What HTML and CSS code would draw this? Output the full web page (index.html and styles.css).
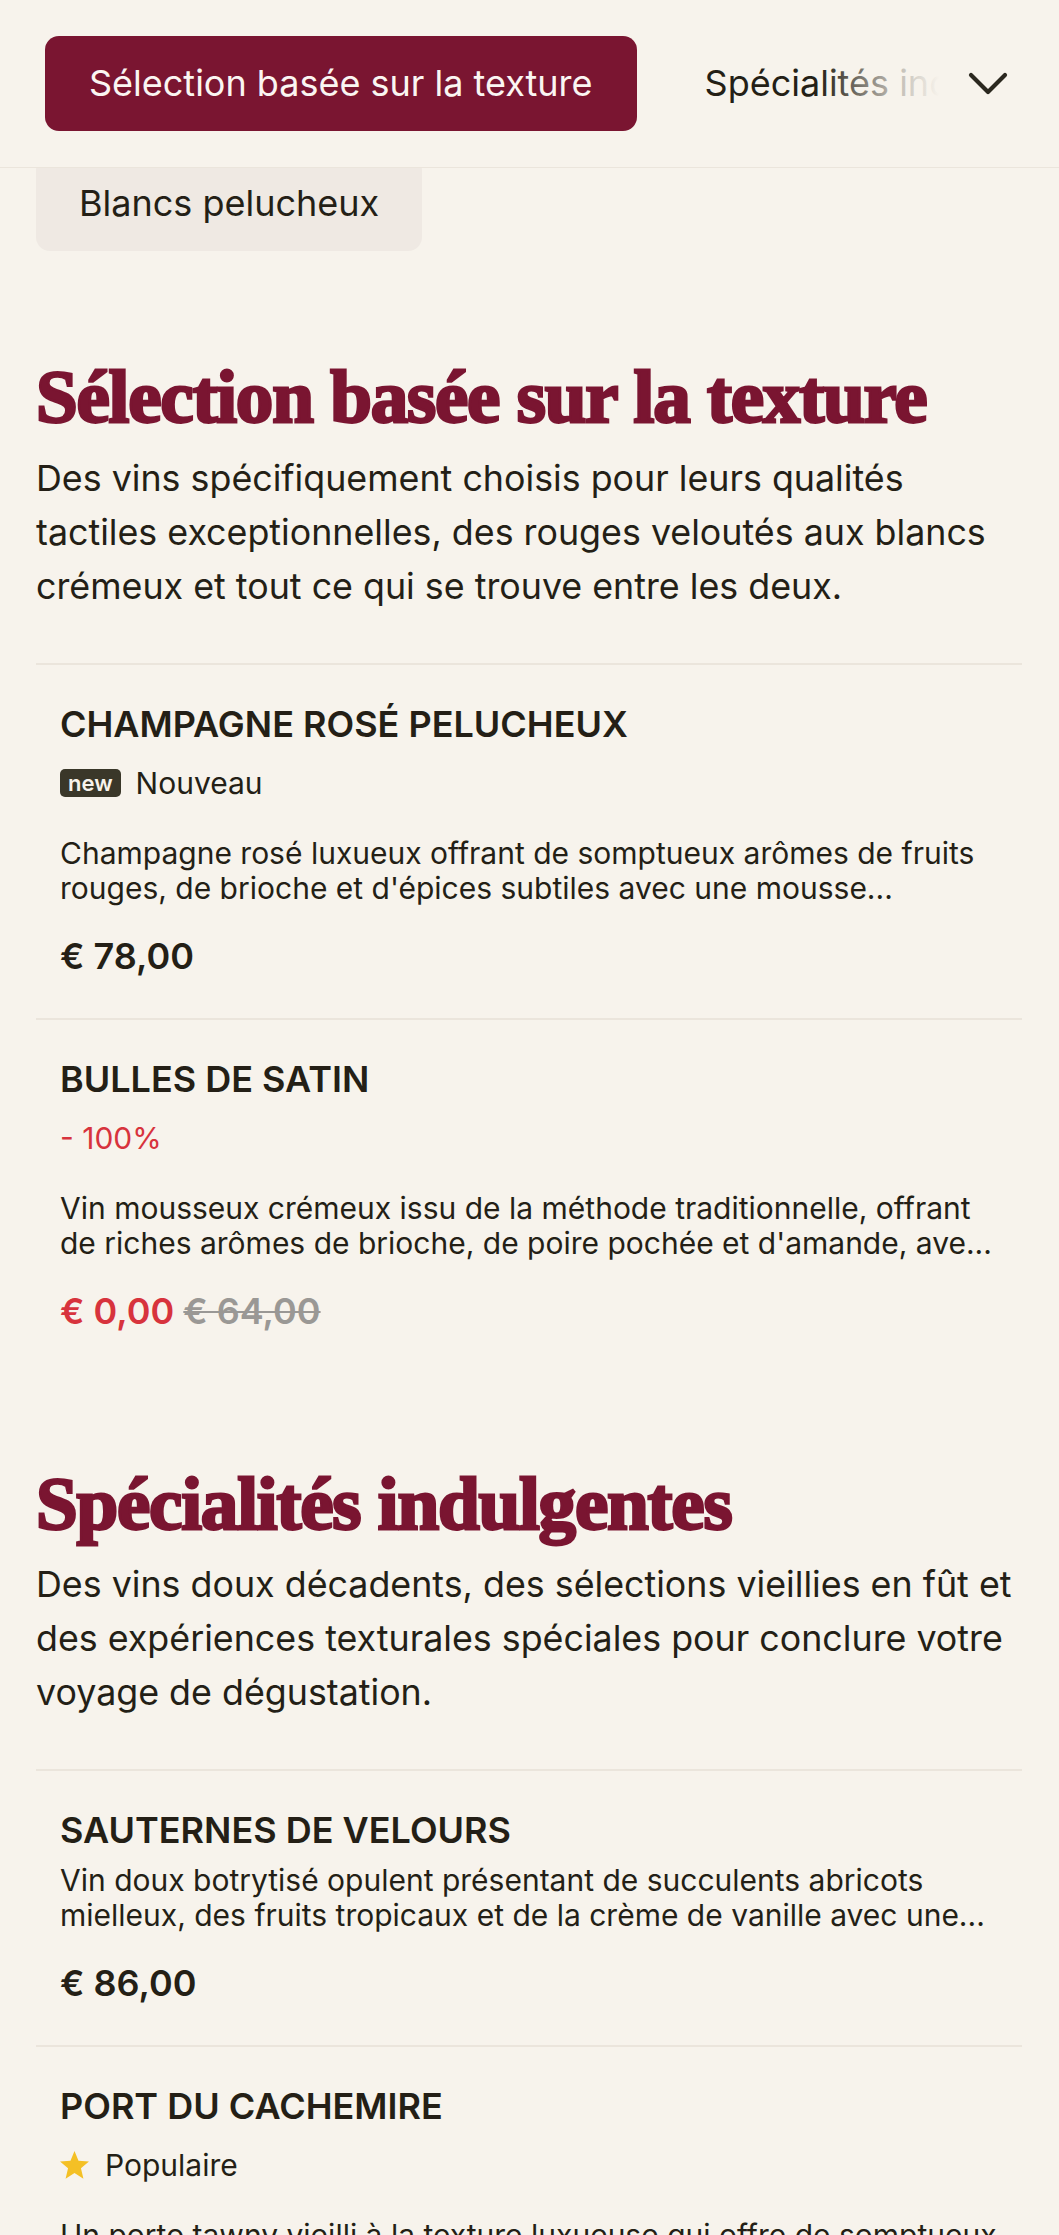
FILE: index.html
```html
<!DOCTYPE html>
<html lang="fr">
<head>
<meta charset="utf-8">
<title>Carte des vins</title>
<link rel="stylesheet" href="styles.css">
</head>
<body>
<div class="page">
  <header class="topbar">
    <nav class="tabs">
      <a class="tab tab-active" href="#texture">Sélection basée sur la texture</a>
      <a class="tab" href="#indulgentes">Spécialités indulgentes</a>
    </nav>
    <div class="tabs-more">
      <button class="more-btn" aria-label="Plus de catégories">
        <svg viewBox="0 0 40 24" width="40" height="24"><path d="M3 3 L20 20 L37 3" fill="none" stroke="currentColor" stroke-width="4.2" stroke-linecap="round" stroke-linejoin="round"/></svg>
      </button>
    </div>
  </header>

  <div class="chips">
    <span class="chip">Blancs pelucheux</span>
  </div>

  <section class="section" id="texture">
    <h2 class="section-title">Sélection basée sur la texture</h2>
    <p class="section-intro">Des vins spécifiquement choisis pour leurs qualités tactiles exceptionnelles, des rouges veloutés aux blancs crémeux et tout ce qui se trouve entre les deux.</p>
    <ul class="items">
      <li class="item">
        <h3 class="item-name">CHAMPAGNE ROSÉ PELUCHEUX</h3>
        <div class="item-tag"><span class="badge-new">new</span><span>Nouveau</span></div>
        <p class="item-desc">Champagne rosé luxueux offrant de somptueux arômes de fruits rouges, de brioche et d'épices subtiles avec une mousse...</p>
        <div class="item-price">€ 78,00</div>
      </li>
      <li class="item">
        <h3 class="item-name">BULLES DE SATIN</h3>
        <div class="item-tag item-tag-discount">- 100%</div>
        <p class="item-desc">Vin mousseux crémeux issu de la méthode traditionnelle, offrant de riches arômes de brioche, de poire pochée et d'amande, ave...</p>
        <div class="item-price"><span class="price-sale">€ 0,00</span> <s class="price-old">€ 64,00</s></div>
      </li>
    </ul>
  </section>

  <section class="section" id="indulgentes">
    <h2 class="section-title">Spécialités indulgentes</h2>
    <p class="section-intro">Des vins doux décadents, des sélections vieillies en fût et des expériences texturales spéciales pour conclure votre voyage de dégustation.</p>
    <ul class="items">
      <li class="item">
        <h3 class="item-name">SAUTERNES DE VELOURS</h3>
        <p class="item-desc">Vin doux botrytisé opulent présentant de succulents abricots mielleux, des fruits tropicaux et de la crème de vanille avec une...</p>
        <div class="item-price">€ 86,00</div>
      </li>
      <li class="item">
        <h3 class="item-name">PORT DU CACHEMIRE</h3>
        <div class="item-tag">
          <svg class="star" viewBox="0 0 24 24" width="31" height="31"><path d="M12 0.8 L15.1 8.3 L23.2 8.9 L17 14.2 L18.9 22.2 L12 17.9 L5.1 22.2 L7 14.2 L0.8 8.9 L8.9 8.3 Z" fill="#f4c025"/></svg>
          <span>Populaire</span>
        </div>
        <p class="item-desc">Un porto tawny vieilli à la texture luxueuse qui offre de somptueux arômes de noix grillées, de caramel et de figues séchées...</p>
        <div class="item-price">€ 92,00</div>
      </li>
    </ul>
  </section>
</div>
</body>
</html>
```

FILE: styles.css
```css
* { box-sizing: border-box; }

html, body {
  margin: 0;
  padding: 0;
  height: 100%;
  overflow: hidden;
}

body {
  background: #f7f3ec;
  color: #241f16;
  font-family: "Inter", "Noto Sans", "Liberation Sans", sans-serif;
}

.page {
  width: 100%;
}

/* ---------- top bar ---------- */
.topbar {
  position: relative;
  z-index: 2;
  height: 168px;
  background: #f7f3ec;
  border-bottom: 1px solid #ebe5dc;
  display: flex;
  align-items: center;
  overflow: hidden;
}

.tabs {
  display: flex;
  gap: 24px;
  padding-left: 45px;
  white-space: nowrap;
}

.tab {
  display: block;
  padding: 22px 44px;
  font-size: 36px;
  line-height: 51px;
  color: #241f16;
  text-decoration: none;
  border-radius: 14px;
}

.tab-active {
  background: #7a1531;
  color: #fbf5f2;
}

.tabs-more {
  position: absolute;
  top: 0;
  right: 0;
  bottom: 0;
  width: 240px;
  display: flex;
  align-items: center;
  justify-content: flex-end;
  padding-right: 51px;
  background: linear-gradient(to right, rgba(247, 243, 236, 0) 0%, rgba(247, 243, 236, 0.7) 30%, #f7f3ec 50%);
}

.more-btn {
  border: 0;
  background: none;
  padding: 0;
  color: #2b281f;
  display: flex;
}

/* ---------- chips ---------- */
.chips {
  position: relative;
  z-index: 1;
  display: flex;
  gap: 16px;
  margin-top: -12px;
  margin-bottom: 15px;
  padding: 0 36px;
}

.chip {
  display: block;
  background: #efe9e3;
  border-radius: 14px;
  padding: 22px 43px;
  font-size: 36px;
  line-height: 51px;
  color: #241f16;
}

/* ---------- sections ---------- */
.section {
  padding: 90px 37px 0 36px;
}

.section-title {
  margin: 0;
  font-family: "Liberation Serif", "Times New Roman", serif;
  font-weight: 700;
  font-size: 75px;
  line-height: 82.5px;
  letter-spacing: -1.2px;
  color: #7a1531;
  -webkit-text-stroke: 2.8px #7a1531;
}

.section-intro {
  margin: 12px 0 50px;
  font-size: 35.8px;
  line-height: 54px;
  color: #241f16;
}

.items {
  list-style: none;
  margin: 0;
  padding: 0;
}

.item {
  display: flex;
  flex-direction: column;
  align-items: flex-start;
  border-top: 2px solid #ebe5dc;
  padding: 37px 24px 40px;
}

.item-name {
  margin: 0;
  font-size: 36px;
  line-height: 44px;
  font-weight: 600;
  color: #241f16;
}

.item-tag {
  display: flex;
  align-items: center;
  gap: 15px;
  margin: 17px 0 22px;
  height: 40px;
  font-size: 30px;
  line-height: 40px;
  color: #241f16;
}

.item-tag-discount {
  color: #d7333d;
}

.badge-new {
  display: inline-block;
  background: #3a3729;
  color: #f7f3ec;
  border-radius: 5px;
  font-size: 22px;
  font-weight: 600;
  line-height: 28px;
  height: 28px;
  padding: 0 8px;
}

.star {
  display: block;
  margin-left: -1px;
}

.item-desc {
  margin: 11px 0 0;
  font-size: 30px;
  line-height: 35px;
  color: #241f16;
  display: -webkit-box;
  -webkit-box-orient: vertical;
  -webkit-line-clamp: 2;
  overflow: hidden;
}

.item-price {
  margin-top: 28px;
  font-size: 36px;
  line-height: 44px;
  font-weight: 600;
  color: #241f16;
}

.price-sale {
  color: #d7333d;
}

.price-old {
  color: #9a9895;
  text-decoration-thickness: 2px;
}
```
